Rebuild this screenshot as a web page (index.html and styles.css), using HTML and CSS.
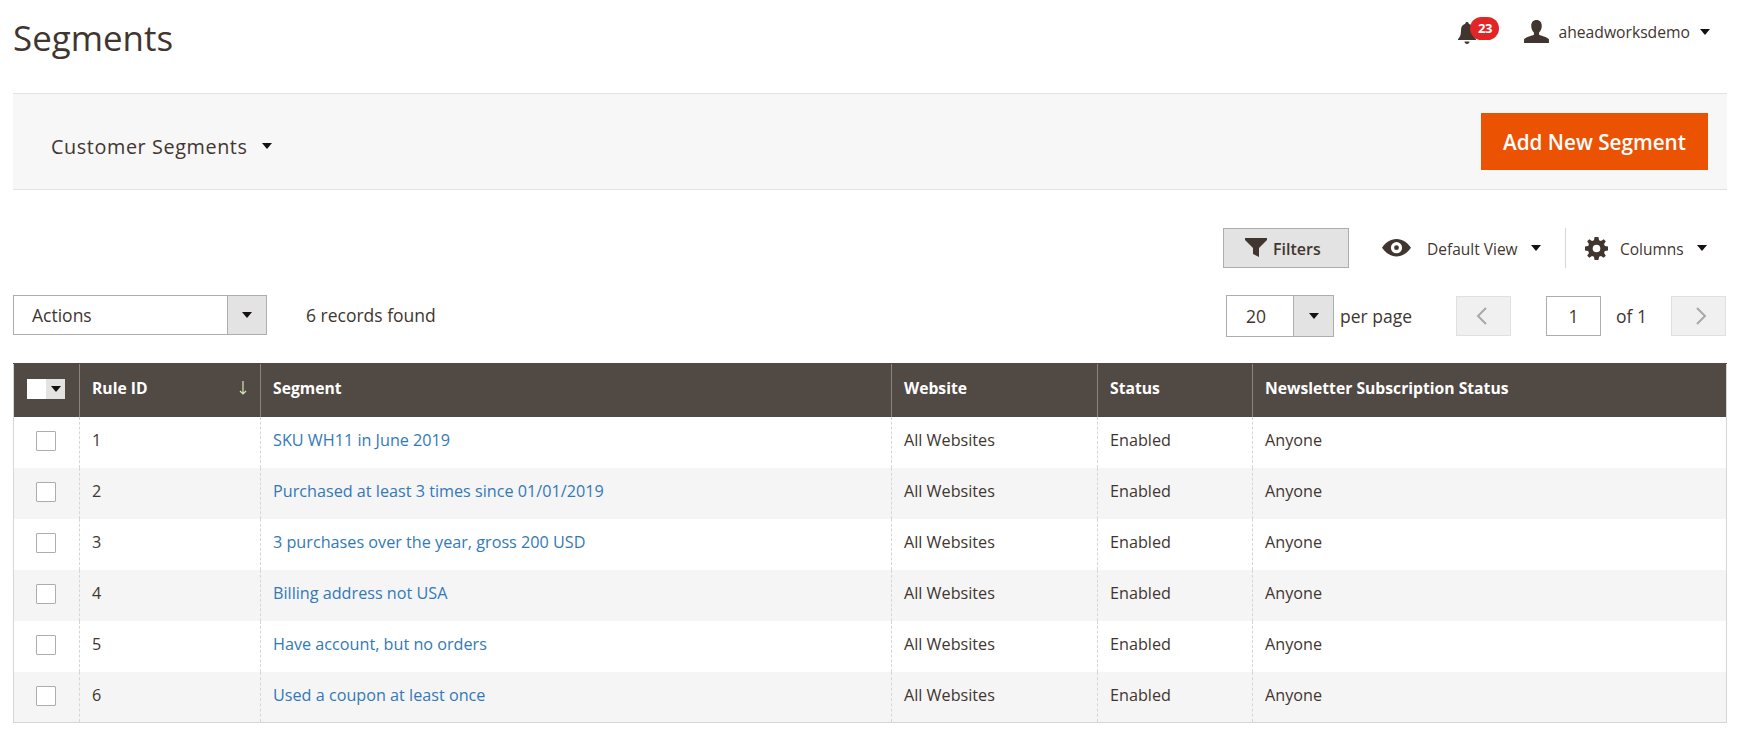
FILE: index.html
```html
<!DOCTYPE html>
<html lang="en">
<head>
<meta charset="utf-8">
<title>Segments</title>
<link rel="stylesheet" href="styles.css">
</head>
<body>
<div class="page">
  <header class="topbar">
    <h1 class="title">Segments</h1>
    <div class="account">
      <div class="bell">
        <svg class="bell-icon" viewBox="0 0 20 24"><path d="M10 1c1 0 1.700.7 1.700 1.700 3 .8 4.300 3.300 4.300 6.300 0 5 1 7 3 9v1H1v-1c2-2 3-4 3-9 0-3 1.300-5.500 4.300-6.300C8.300 1.700 9 1 10 1zM7.500 20.500h5C12.500 22 11.400 23 10 23s-2.500-1-2.500-2.500z"/></svg>
        <span class="badge">23</span>
      </div>
      <svg class="user-icon" viewBox="0 0 26 24"><path d="M13 0c3.600 0 5.500 2.500 5.500 6 0 2.800-1 5.500-2.800 7v2.300c2 1.200 8.300 2.200 10.300 4.700v4H0v-4c2-2.500 8.300-3.500 10.300-4.700V13C8.500 11.500 7.500 8.800 7.500 6c0-3.500 1.900-6 5.500-6z"/></svg>
      <span class="username">aheadworksdemo</span>
      <span class="caret"></span>
    </div>
  </header>

  <section class="band">
    <div class="band-menu">
      <span>Customer Segments</span>
      <span class="caret"></span>
    </div>
    <button class="primary" type="button">Add New Segment</button>
  </section>

  <section class="tools">
    <button class="filters" type="button">
      <svg class="filter-icon" viewBox="0 0 22 19"><path d="M0 0h22v2L14 10v9l-6-3v-6L0 2z"/></svg>
      <span>Filters</span>
    </button>
    <div class="view">
      <svg class="eye-icon" viewBox="0 0 30 18"><path fill-rule="evenodd" d="M15 0c6.500 0 11.500 4 15 9-3.500 5-8.500 9-15 9S3.500 14 0 9c3.500-5 8.500-9 15-9zm0 3.200a5.800 5.800 0 100 11.600 5.800 5.800 0 000-11.600zm0 3.300a2.500 2.500 0 110 5 2.500 2.500 0 010-5z"/></svg>
      <span class="tool-label">Default View</span>
      <span class="caret"></span>
    </div>
    <div class="columns">
      <svg class="gear-icon" viewBox="0 0 24 24"><path fill-rule="evenodd" d="M10 0h4l.7 3.300 2 .8L19.500 2.300l2.200 2.200-1.800 2.800.8 2 3.300.7v4l-3.300.7-.8 2 1.800 2.800-2.200 2.200-2.800-1.800-2 .8L14 24h-4l-.7-3.300-2-.8-2.800 1.800-2.200-2.200 1.800-2.800-.8-2L0 14v-4l3.300-.7.8-2-1.800-2.800 2.200-2.200 2.800 1.800 2-.8zM12 8a4 4 0 100 8 4 4 0 000-8z"/></svg>
      <span class="tool-label">Columns</span>
      <span class="caret"></span>
    </div>
  </section>

  <section class="pager-row">
    <div class="left-tools">
      <div class="select actions">
        <span class="select-text">Actions</span>
        <span class="select-arrow"><span class="caret"></span></span>
      </div>
      <span class="records">6 records found</span>
    </div>
    <div class="right-tools">
      <div class="select per">
        <span class="select-text">20</span>
        <span class="select-arrow"><span class="caret"></span></span>
      </div>
      <span class="per-label">per page</span>
      <button class="nav prev" type="button"><svg viewBox="0 0 12 20"><path d="M10 2L2 10l8 8"/></svg></button>
      <span class="page-input">1</span>
      <span class="of">of 1</span>
      <button class="nav next" type="button"><svg viewBox="0 0 12 20"><path d="M2 2l8 8-8 8"/></svg></button>
    </div>
  </section>

  <table class="grid">
    <colgroup>
      <col class="c-check"><col class="c-id"><col class="c-seg"><col class="c-web"><col class="c-status"><col>
    </colgroup>
    <thead>
      <tr>
        <th class="check-head"><span class="multi"><span class="multi-box"></span><span class="multi-arrow"><span class="caret"></span></span></span></th>
        <th><div class="sort-cell"><span>Rule ID</span><svg class="sort-arrow" viewBox="0 0 8 14"><path d="M4 0v13M1 10l3 3 3-3"/></svg></div></th>
        <th>Segment</th>
        <th>Website</th>
        <th>Status</th>
        <th>Newsletter Subscription Status</th>
      </tr>
    </thead>
    <tbody>
      <tr><td class="check"><span class="box"></span></td><td>1</td><td><a href="#">SKU WH11 in June 2019</a></td><td>All Websites</td><td>Enabled</td><td>Anyone</td></tr>
      <tr><td class="check"><span class="box"></span></td><td>2</td><td><a href="#">Purchased at least 3 times since 01/01/2019</a></td><td>All Websites</td><td>Enabled</td><td>Anyone</td></tr>
      <tr><td class="check"><span class="box"></span></td><td>3</td><td><a href="#">3 purchases over the year, gross 200 USD</a></td><td>All Websites</td><td>Enabled</td><td>Anyone</td></tr>
      <tr><td class="check"><span class="box"></span></td><td>4</td><td><a href="#">Billing address not USA</a></td><td>All Websites</td><td>Enabled</td><td>Anyone</td></tr>
      <tr><td class="check"><span class="box"></span></td><td>5</td><td><a href="#">Have account, but no orders</a></td><td>All Websites</td><td>Enabled</td><td>Anyone</td></tr>
      <tr><td class="check"><span class="box"></span></td><td>6</td><td><a href="#">Used a coupon at least once</a></td><td>All Websites</td><td>Enabled</td><td>Anyone</td></tr>
    </tbody>
  </table>
</div>
</body>
</html>
```
FILE: styles.css
```css
* { box-sizing: border-box; }
html, body { margin: 0; padding: 0; background: #fff; }
body {
  font-family: "Open Sans", "Liberation Sans", sans-serif;
  font-size: 16px;
  color: #41362f;
  height: 737px;
  overflow: hidden;
}
.page { padding: 0 17px 0 13px; }

.caret {
  display: inline-block;
  width: 0;
  height: 0;
  border-left: 5px solid transparent;
  border-right: 5px solid transparent;
  border-top: 6px solid #16110e;
}

.topbar {
  height: 94px;
  border-bottom: 1px solid #e3e3e3;
  display: flex;
  justify-content: space-between;
  align-items: flex-start;
}
.title {
  margin: 15px 0 0;
  font-size: 34.9px;
  line-height: 46px;
  font-weight: 400;
  color: #41362f;
}
.account { display: flex; align-items: center; padding: 18px 17px 0 0; height: 48px; }
.bell { position: relative; width: 20px; height: 24px; margin-right: 51px; }
.bell-icon { display: block; width: 20px; height: 24px; fill: #41362f; }
.badge {
  position: absolute;
  left: 13px;
  top: -4px;
  width: 29px;
  height: 23px;
  border-radius: 12px;
  background: #e22626;
  color: #fff;
  font-size: 13px;
  font-weight: 700;
  line-height: 23px;
  text-align: center;
  letter-spacing: -0.5px;
}
.user-icon { width: 25px; height: 23px; fill: #41362f; margin: -3px 9px 0 -4px; }
.username { font-size: 15.7px; margin-right: 10px; margin-top: -2px; }
.account .caret { margin-top: -2px; }

.band {
  height: 96px;
  background: #f7f7f7;
  border-bottom: 1px solid #e3e3e3;
  display: flex;
  justify-content: space-between;
  padding: 19px 19px 0 38px;
}
.band-menu {
  display: flex;
  align-items: center;
  gap: 14px;
  height: 58px;
  font-size: 19.8px;
  letter-spacing: 0.6px;
  padding-top: 8px;
}
.primary {
  width: 227px;
  height: 57px;
  background: #eb5202;
  border: 0;
  color: #fff;
  font-family: inherit;
  font-size: 20.7px;
  font-weight: 600;
  padding: 0;
}

.tools {
  display: flex;
  justify-content: flex-end;
  align-items: center;
  height: 40px;
  margin-top: 38px;
  padding-right: 5px;
  font-size: 15.5px;
}
.tool-label { padding-top: 2px; }
.filters {
  width: 126px;
  height: 40px;
  background: #e3e3e3;
  border: 1px solid #adadad;
  color: #41362f;
  font-family: inherit;
  font-size: 16px;
  font-weight: 600;
  display: flex;
  align-items: center;
  gap: 6px;
  padding: 2px 0 0 21px;
}
.filter-icon { width: 22px; height: 19px; fill: #41362f; margin-top: -3px; }
.view {
  display: flex;
  align-items: center;
  margin-left: 33px;
  width: 183px;
  height: 40px;
}
.eye-icon { width: 29px; height: 17.4px; fill: #41362f; margin-right: 16px; }
.view .caret, .columns .caret { margin-left: 13px; }
.columns {
  display: flex;
  align-items: center;
  height: 40px;
  border-left: 1px solid #d6d6d6;
  padding-left: 19px;
  width: 157px;
}
.gear-icon { width: 23px; height: 23px; fill: #41362f; margin-right: 12px; }

.pager-row {
  display: flex;
  justify-content: space-between;
  align-items: center;
  height: 42px;
  margin-top: 27px;
  padding-right: 1px;
}
.left-tools, .right-tools { display: flex; align-items: center; }
.left-tools { margin-top: -2px; }
.select {
  display: flex;
  background: #fff;
  border: 1px solid #adadad;
}
.select-text { flex: 1; }
.select-arrow {
  background: #e3e3e3;
  border-left: 1px solid #adadad;
  display: flex;
  align-items: center;
  justify-content: center;
}
.actions { width: 254px; height: 40px; }
.actions .select-text { padding-left: 18px; font-size: 17.5px; line-height: 38.5px; }
.actions .select-arrow { width: 39px; }
.records { margin-left: 39px; font-size: 17.5px; }
.per { width: 108px; height: 42px; margin-right: 6px; }
.per .select-text { padding-left: 19px; font-size: 17.5px; line-height: 40px; }
.per .select-arrow { width: 40px; }
.per-label { font-size: 17.5px; width: 116px; }
.nav {
  width: 55px;
  height: 40px;
  background: #f0f0f0;
  border: 1px solid #e0e0e0;
  padding: 0;
  display: flex;
  align-items: center;
  justify-content: center;
}
.nav.prev { padding-right: 4px; }
.nav.next { padding-left: 4px; }
.nav svg { width: 12px; height: 20px; fill: none; stroke: #a8a8a8; stroke-width: 2; }
.page-input {
  width: 55px;
  height: 40px;
  margin-left: 35px;
  border: 1px solid #adadad;
  text-align: center;
  font-size: 17.5px;
  line-height: 38px;
}
.of { margin-left: 15px; width: 55px; font-size: 17.5px; }

.grid {
  width: 100%;
  margin-top: 26px;
  border-collapse: collapse;
  table-layout: fixed;
  font-size: 16.2px;
  border: 1px solid #d6d6d6;
}
.c-check { width: 66px; }
.c-id { width: 181px; }
.c-seg { width: 631px; }
.c-web { width: 206px; }
.c-status { width: 155px; }
.grid th {
  height: 53px;
  background: #514943;
  color: #fff;
  font-weight: 700;
  text-align: left;
  padding: 0 12px 4px;
  border-left: 1px solid #8a837e;
  font-size: 15.7px;
  border-top: 1px solid #514943;
}
.grid th:first-child { border-left: 0; }
.grid td {
  height: 51px;
  padding: 0 12px 4px;
  border-left: 1px dashed #d6d6d6;
}
.grid td:first-child { border-left: 0; }
.grid tbody tr:nth-child(even) td { background: #f5f5f5; }
.grid a { color: #3379b7; text-decoration: none; }
.sort-cell { display: flex; justify-content: space-between; align-items: center; height: 22px; }
.sort-arrow { width: 8px; height: 14px; fill: none; stroke: #d5e6b5; stroke-width: 1.2; margin-right: 1px; }
.grid th.check-head { padding: 0 1px 5px 0; text-align: center; }
.grid td.check { padding: 0 1px 4px 0; text-align: center; }
.multi { display: inline-flex; height: 20px; vertical-align: middle; }
.multi-box { width: 19px; background: #fff; }
.multi-arrow {
  width: 19px;
  background: #e3e3e3;
  display: flex;
  align-items: center;
  justify-content: center;
}
.box {
  display: inline-block;
  width: 20px;
  height: 20px;
  vertical-align: middle;
  background: #fff;
  border: 1px solid #adadad;
  border-radius: 1px;
}
```
